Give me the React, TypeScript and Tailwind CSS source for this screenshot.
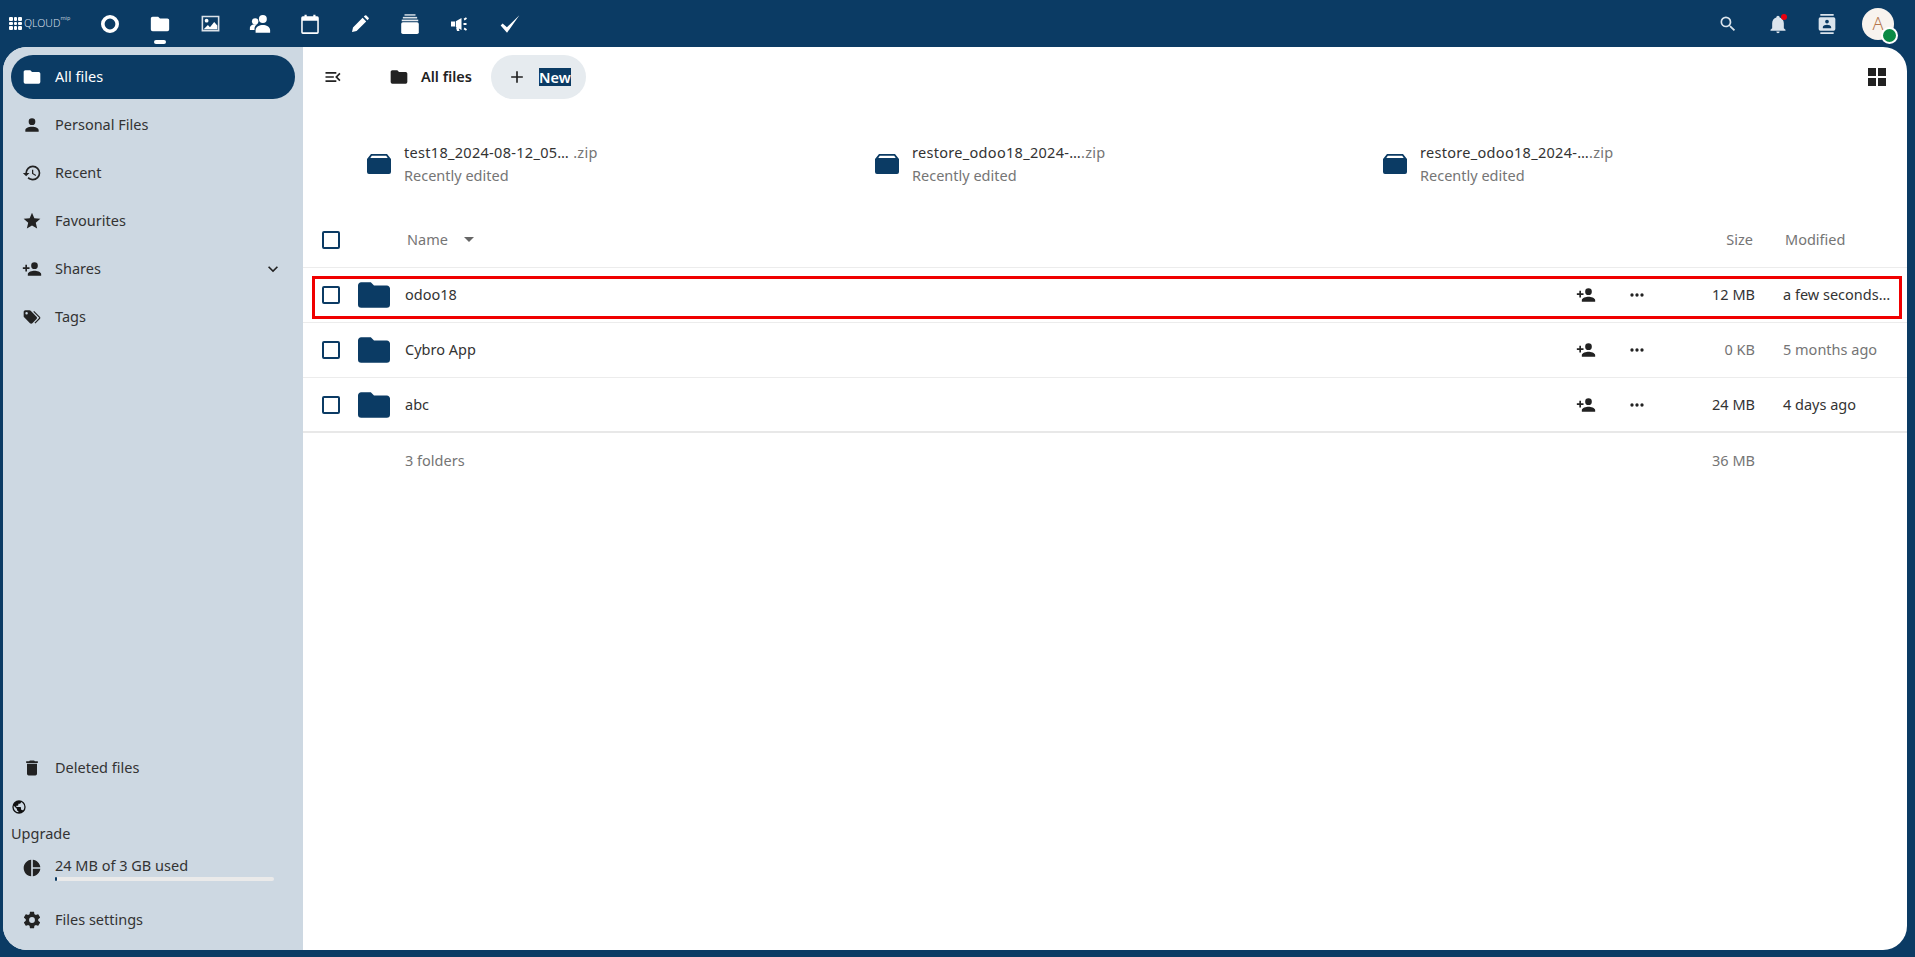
import React from "react";

const P = {
  folder: "M10,4H4C2.89,4 2,4.89 2,6V18A2,2 0 0,0 4,20H20A2,2 0 0,0 22,18V8C22,6.89 21.1,6 20,6H12L10,4Z",
  account: "M12,4A4,4 0 0,1 16,8A4,4 0 0,1 12,12A4,4 0 0,1 8,8A4,4 0 0,1 12,4M12,14C16.42,14 20,15.79 20,18V20H4V18C4,15.79 7.58,14 12,14Z",
  history: "M13.5,8H12V13L16.28,15.54L17,14.33L13.5,12.25V8M13,3A9,9 0 0,0 4,12H1L4.96,16.03L9,12H6A7,7 0 0,1 13,5A7,7 0 0,1 20,12A7,7 0 0,1 13,19C11.07,19 9.32,18.21 8.06,16.94L6.64,18.36C8.27,20 10.5,21 13,21A9,9 0 0,0 22,12A9,9 0 0,0 13,3",
  star: "M12,17.27L18.18,21L16.54,13.97L22,9.24L14.81,8.62L12,2L9.19,8.62L2,9.24L7.45,13.97L5.82,21L12,17.27Z",
  share: "M15,14C12.33,14 7,15.33 7,18V20H23V18C23,15.33 17.67,14 15,14M6,10V7H4V10H1V12H4V15H6V12H9V10M15,12A4,4 0 0,0 19,8A4,4 0 0,0 15,4A4,4 0 0,0 11,8A4,4 0 0,0 15,12Z",
  tags: "M5.5,9A1.5,1.5 0 0,0 7,7.5A1.5,1.5 0 0,0 5.5,6A1.5,1.5 0 0,0 4,7.5A1.5,1.5 0 0,0 5.5,9M17.41,11.58C17.77,11.94 18,12.44 18,13C18,13.55 17.78,14.05 17.41,14.41L12.41,19.41C12.05,19.77 11.55,20 11,20C10.45,20 9.95,19.78 9.58,19.41L2.59,12.42C2.22,12.05 2,11.55 2,11V6C2,4.89 2.89,4 4,4H9C9.55,4 10.05,4.22 10.41,4.58L17.41,11.58M13.54,5.71L14.54,4.71L21.41,11.58C21.78,11.94 22,12.45 22,13C22,13.55 21.78,14.05 21.42,14.41L16.04,19.79L15.04,18.79L20.75,13L13.54,5.71Z",
  trash: "M19,4H15.5L14.5,3H9.5L8.5,4H5V6H19M6,19A2,2 0 0,0 8,21H16A2,2 0 0,0 18,19V7H6V19Z",
  earth: "M17.9,17.39C17.64,16.59 16.89,16 16,16H15V13A1,1 0 0,0 14,12H8V10H10A1,1 0 0,0 11,9V7H13A2,2 0 0,0 15,5V4.59C17.93,5.77 20,8.64 20,12C20,14.08 19.2,15.97 17.9,17.39M11,19.93C7.05,19.44 4,16.08 4,12C4,11.38 4.08,10.78 4.21,10.21L9,15V16A2,2 0 0,0 11,18M12,2A10,10 0 0,0 2,12A10,10 0 0,0 12,22A10,10 0 0,0 22,12A10,10 0 0,0 12,2Z",
  pie: "M11,2V22C5.9,21.5 2,17.2 2,12C2,6.8 5.9,2.5 11,2M13,2V11H22C21.5,6.2 17.8,2.5 13,2M13,13V22C17.7,21.5 21.5,17.8 22,13H13Z",
  cog: "M12,15.5A3.5,3.5 0 0,1 8.5,12A3.5,3.5 0 0,1 12,8.5A3.5,3.5 0 0,1 15.5,12A3.5,3.5 0 0,1 12,15.5M19.43,12.97C19.47,12.65 19.5,12.33 19.5,12C19.5,11.67 19.47,11.34 19.43,11L21.54,9.37C21.73,9.22 21.78,8.95 21.66,8.73L19.66,5.27C19.54,5.05 19.27,4.96 19.05,5.05L16.56,6.05C16.04,5.66 15.5,5.32 14.87,5.07L14.5,2.42C14.46,2.18 14.25,2 14,2H10C9.75,2 9.54,2.18 9.5,2.42L9.13,5.07C8.5,5.32 7.96,5.66 7.44,6.05L4.95,5.05C4.73,4.96 4.46,5.05 4.34,5.27L2.34,8.73C2.21,8.95 2.27,9.22 2.46,9.37L4.57,11C4.53,11.34 4.5,11.67 4.5,12C4.5,12.33 4.53,12.65 4.57,12.97L2.46,14.63C2.27,14.78 2.21,15.05 2.34,15.27L4.34,18.73C4.46,18.95 4.73,19.03 4.95,18.95L7.44,17.94C7.96,18.34 8.5,18.68 9.13,18.93L9.5,21.58C9.54,21.82 9.75,22 10,22H14C14.25,22 14.46,21.82 14.5,21.58L14.87,18.93C15.5,18.67 16.04,18.34 16.56,17.94L19.05,18.95C19.27,19.03 19.54,18.95 19.66,18.73L21.66,15.27C21.78,15.05 21.73,14.78 21.54,14.63L19.43,12.97Z",
  chevron: "M7.41,8.58L12,13.17L16.59,8.58L18,10L12,16L6,10L7.41,8.58Z",
  dots: "M16,12A2,2 0 0,1 18,10A2,2 0 0,1 20,12A2,2 0 0,1 18,14A2,2 0 0,1 16,12M10,12A2,2 0 0,1 12,10A2,2 0 0,1 14,12A2,2 0 0,1 12,14A2,2 0 0,1 10,12M4,12A2,2 0 0,1 6,10A2,2 0 0,1 8,12A2,2 0 0,1 6,14A2,2 0 0,1 4,12Z",
  plus: "M19,13H13V19H11V13H5V11H11V5H13V11H19V13Z",
  grid: "M3,11H11V3H3M3,21H11V13H3M13,21H21V13H13M13,3V11H21V3",
  menuOpen: "M21,15.61L19.59,17L14.58,12L19.59,7L21,8.39L17.44,12L21,15.61M3,6H16V8H3V6M3,13V11H13V13H3M3,18V16H16V18H3Z",
  search: "M9.5,3A6.5,6.5 0 0,1 16,9.5C16,11.11 15.41,12.59 14.44,13.73L14.71,14H15.5L20.5,19L19,20.5L14,15.5V14.71L13.73,14.44C12.59,15.41 11.11,16 9.5,16A6.5,6.5 0 0,1 3,9.5A6.5,6.5 0 0,1 9.5,3M9.5,5C7,5 5,7 5,9.5C5,12 7,14 9.5,14C12,14 14,12 14,9.5C14,7 12,5 9.5,5Z",
  bell: "M21,19V20H3V19L5,17V11C5,7.9 7.03,5.17 10,4.29C10,4.19 10,4.1 10,4A2,2 0 0,1 12,2A2,2 0 0,1 14,4C14,4.1 14,4.19 14,4.29C16.97,5.17 19,7.9 19,11V17L21,19M14,21A2,2 0 0,1 12,23A2,2 0 0,1 10,21",
  contacts: "M20,0H4V2H20V0M4,24H20V22H4V24M20,4H4A2,2 0 0,0 2,6V18A2,2 0 0,0 4,20H20A2,2 0 0,0 22,18V6A2,2 0 0,0 20,4M12,6.75A2.25,2.25 0 0,1 14.25,9A2.25,2.25 0 0,1 12,11.25A2.25,2.25 0 0,1 9.75,9A2.25,2.25 0 0,1 12,6.75M17,17H7V15.5C7,13.83 10.33,13 12,13C13.67,13 17,13.83 17,15.5V17Z",
};

function Icon({ d, className }: { d: string; className?: string }) {
  return (
    <svg viewBox="0 0 24 24" fill="currentColor" className={className}>
      <path d={d} />
    </svg>
  );
}

function NavItem({ d, label, active, chevron }: { d: string; label: string; active?: boolean; chevron?: boolean }) {
  return (
    <div className={"flex h-[44px] items-center rounded-full pl-[11px] pr-[12px] mb-[4px] " + (active ? "bg-[#0b3b64] text-white" : "text-[#333]")}>
      <Icon d={d} className={"w-[20px] h-[20px] shrink-0 " + (active ? "text-white" : "text-[#222]")} />
      <span className="ml-[13px] flex-1">{label}</span>
      {chevron && <Icon d={P.chevron} className="w-[20px] h-[20px] text-[#222]" />}
    </div>
  );
}

function AppSlot({ children, active }: { children: React.ReactNode; active?: boolean }) {
  return (
    <div className="relative flex w-[50px] h-[42px] items-center justify-center">
      {children}
      {active && <span className="absolute bottom-[1px] left-[19px] w-[12px] h-[4px] rounded-full bg-white" />}
    </div>
  );
}

function TopApps() {
  return (
    <div className="flex items-center">
      <AppSlot>
        <svg viewBox="0 0 20 20" className="w-[20px] h-[20px] text-white" fill="none" stroke="currentColor" strokeWidth="3.6"><circle cx="10" cy="10" r="7.2" /></svg>
      </AppSlot>
      <AppSlot active>
        <Icon d={P.folder} className="w-[22px] h-[22px] text-white" />
      </AppSlot>
      <AppSlot>
        <svg viewBox="0 0 20 20" className="w-[21px] h-[21px] text-white" fill="currentColor">
          <path fillRule="evenodd" opacity=".85" d="M1.500 2.500h17v15h-17zM3 4v12h14V4z" />
          <circle cx="6.300" cy="7.300" r="1.800" />
          <path d="M3.500 15.500l4-4 2 2 4-5 3 3.500v3.500z" />
        </svg>
      </AppSlot>
      <AppSlot>
        <svg viewBox="0 0 20 20" className="w-[22px] h-[22px] text-white" fill="currentColor">
          <circle cx="12.600" cy="5.500" r="3.600" />
          <path d="M6 18v-2.400c0-3 3.600-4.600 6.600-4.600s6.600 1.600 6.600 4.600V18z" />
          <circle cx="5.600" cy="7.600" r="2.900" />
          <path d="M.8 15.500v-1.700c0-2.200 2.500-3.500 4.800-3.500.6 0 1.100.1 1.700.2-1.500.9-2.300 2.300-2.300 4v1z" />
        </svg>
      </AppSlot>
      <AppSlot>
        <svg viewBox="0 0 20 20" className="w-[22px] h-[22px] text-white" fill="currentColor">
          <path fillRule="evenodd" d="M3.500 3H5V1.500h2V3h6V1.500h2V3h1.500A1.500 1.500 0 0 1 18 4.500v13a1.500 1.500 0 0 1-1.500 1.500h-13A1.500 1.500 0 0 1 2 17.500v-13A1.500 1.500 0 0 1 3.500 3zM3.400 7v10.600h13.200V7z" />
        </svg>
      </AppSlot>
      <AppSlot>
        <svg viewBox="0 0 20 20" className="w-[20px] h-[20px] text-white" fill="currentColor">
          <path d="M2 18l1-4.600L12.600 3.800l3.600 3.600L6.600 17zM13.800 2.600l1.200-1.100a1 1 0 0 1 1.400 0l2.200 2.200a1 1 0 0 1 0 1.400l-1.200 1.100z" />
        </svg>
      </AppSlot>
      <AppSlot>
        <svg viewBox="0 0 20 20" className="w-[22px] h-[22px] text-white" fill="currentColor">
          <path d="M5 1h10v1.500H5z" opacity=".75" />
          <path d="M3.500 3.500h13V5h-13z" opacity=".85" />
          <path d="M2.500 6h15v1.500h-15z" opacity=".9" />
          <path d="M3.500 8.500h13A1.500 1.500 0 0 1 18 10v7.500a1.500 1.500 0 0 1-1.500 1.500h-13A1.500 1.500 0 0 1 2 17.500V10a1.500 1.500 0 0 1 1.500-1.500z" />
        </svg>
      </AppSlot>
      <AppSlot>
        <svg viewBox="0 0 20 20" className="w-[20px] h-[20px] text-white" fill="currentColor">
          <path d="M1 7.500h4v5H1zM5.800 7.300l5.700-3.300v12l-5.700-3.300zM6 13.500h2.500l1 3.500H7z" />
          <path d="M13.500 9h3v2h-3zM13.600 4.800l2.400-1.600 1 1.600-2.400 1.600zM13.600 15.200l2.400 1.600 1-1.600-2.400-1.600z" />
        </svg>
      </AppSlot>
      <AppSlot>
        <svg viewBox="0 0 20 20" className="w-[22px] h-[22px] text-white" fill="currentColor">
          <path d="M1.500 11.300L3.300 9.500 7.200 13 18.500 2 7.300 18z" />
        </svg>
      </AppSlot>
    </div>
  );
}

function Logo() {
  const dots = Array.from({ length: 9 });
  return (
    <div className="flex w-[76px] items-center text-white">
      <div className="grid grid-cols-3 gap-[1px] w-[13px]">
        {dots.map((_, i) => (
          <span key={i} className="w-[3.5px] h-[3.5px] bg-white rounded-[1px]" />
        ))}
      </div>
      <span className="ml-[2px] text-[10.500px] leading-none text-[#d5dfe8] font-light">QLOUD</span>
      <span className="text-[5.500px] leading-none self-start mt-[-1px] text-[#b9c7d4]">mip</span>
    </div>
  );
}

function Recent({ name, ext }: { name: string; ext: string }) {
  return (
    <div className="flex items-center w-[508px]">
      <svg viewBox="0 0 24 20" className="w-[24px] h-[20px] text-[#0b3b64] ml-[11px] shrink-0" fill="currentColor">
        <path fillRule="evenodd" d="M4 0h16l4 5v13a2 2 0 0 1-2 2H2a2 2 0 0 1-2-2V5zM4.800 1.800L3.300 4h17.400l-1.500-2.200z" />
      </svg>
      <div className="ml-[13px] flex flex-col">
        <div className="h-[22px] leading-[22px] text-[#333] whitespace-pre tracking-[0.3px]">
          {name}
          <span className="text-[#757575]">{ext}</span>
        </div>
        <div className="h-[24px] leading-[24px] text-[#757575]">Recently edited</div>
      </div>
    </div>
  );
}

function Row({ name, size, modified, dim, last }: { name: string; size: string; modified: string; dim?: boolean; last?: boolean }) {
  return (
    <div className={"flex items-center h-[55px] " + (last ? "border-b-2 border-[#e8e8e8]" : "border-b border-[#ececec]")}>
      <span className="ml-[19px] w-[18px] h-[18px] border-2 border-[#0b3b64] rounded-[2px] bg-white shrink-0" />
      <svg viewBox="2 4 20 16" className="ml-[18px] w-[32px] h-[26px] text-[#0b3b64] shrink-0" fill="currentColor">
        <path d={P.folder} />
      </svg>
      <span className="ml-[15px] flex-1 text-[#333]">{name}</span>
      <Icon d={P.share} className="w-[20px] h-[20px] text-[#222] mr-[31px]" />
      <Icon d={P.dots} className="w-[20px] h-[20px] text-[#222] mr-[17px]" />
      <span className={"w-[91px] text-right " + (dim ? "text-[#757575]" : "text-[#333]")}>{size}</span>
      <span className={"ml-[28px] w-[111px] whitespace-nowrap " + (dim ? "text-[#757575]" : "text-[#333]")}>{modified}</span>
      <span className="w-[13px]" />
    </div>
  );
}

export default function App() {
  return (
    <div className="flex h-[957px] w-[1915px] flex-col overflow-hidden bg-[#0b3b64] text-[14.500px]" style={{ fontFamily: '"Noto Sans", "Open Sans", sans-serif' }}>
      <header className="flex h-[47px] shrink-0 items-center pl-[9px] text-white">
        <Logo />
        <TopApps />
        <div className="ml-auto flex items-center">
          <Icon d={P.search} className="w-[20px] h-[20px] text-[#dbe4ec]" />
          <div className="relative ml-[30px]">
            <Icon d={P.bell} className="w-[20px] h-[20px] text-[#dbe4ec]" />
            <span className="absolute top-[0px] right-[1px] w-[6px] h-[6px] rounded-full bg-[#e9000f]" />
          </div>
          <Icon d={P.contacts} className="ml-[29px] w-[20px] h-[20px] text-[#dbe4ec]" />
          <div className="relative ml-[25px] mr-[21px] flex w-[32px] h-[32px] items-center justify-center rounded-full bg-[#f8f3ee] text-[#b5764c] text-[18px] font-light">
            A
            <span className="absolute right-[-4px] bottom-[-4px] w-[17px] h-[17px] rounded-full bg-[#0a8a45] border-2 border-white" />
          </div>
        </div>
      </header>
      <div className="ml-[3px] mr-[8px] mb-[7px] flex flex-1 min-h-0 overflow-hidden rounded-[24px] bg-white">
        <aside className="flex w-[300px] shrink-0 flex-col bg-[#cdd8e2] pl-[8px] pr-[8px] pt-[8px] text-[#333]">
          <NavItem d={P.folder} label="All files" active />
          <NavItem d={P.account} label="Personal Files" />
          <NavItem d={P.history} label="Recent" />
          <NavItem d={P.star} label="Favourites" />
          <NavItem d={P.share} label="Shares" chevron />
          <NavItem d={P.tags} label="Tags" />
          <div className="mt-auto">
            <NavItem d={P.trash} label="Deleted files" />
            <Icon d={P.earth} className="w-[16px] h-[16px] mt-[9px] text-[#111]" />
            <div className="mt-[8px] leading-[20px]">Upgrade</div>
            <div className="mt-[12px] flex items-center pl-[11px] pr-[21px]">
              <Icon d={P.pie} className="w-[20px] h-[20px] shrink-0 text-[#222]" />
              <div className="ml-[13px] flex-1">
                <div className="leading-[20px]">24 MB of 3 GB used</div>
                <div className="mt-[2px] h-[4px] rounded-full bg-[#eaeaea]">
                  <div className="h-full w-[2px] rounded-full bg-[#0b3b64]" />
                </div>
              </div>
            </div>
            <div className="mt-[17px]">
              <NavItem d={P.cog} label="Files settings" />
            </div>
            <div className="h-[4px]" />
          </div>
        </aside>
        <main className="relative flex-1 min-w-0">
          <div className="flex h-[44px] mt-[8px] items-center">
            <Icon d={P.menuOpen} className="ml-[20px] w-[20px] h-[20px] text-[#222]" />
            <Icon d={P.folder} className="ml-[46px] w-[20px] h-[20px] text-[#222]" />
            <span className="ml-[12px] font-semibold text-[#222]">All files</span>
            <div className="ml-[19px] flex h-[44px] w-[95px] items-center rounded-full bg-[#e6ebef] pl-[16px] text-[#222]">
              <Icon d={P.plus} className="w-[20px] h-[20px]" />
              <span className="ml-[12px] bg-[#0b3b64] font-semibold text-white leading-[18px]">New</span>
            </div>
            <Icon d={P.grid} className="ml-auto mr-[18px] w-[24px] h-[24px] text-[#222]" />
          </div>
          <div className="mt-[42px] flex pl-[53px]">
            <Recent name="test18_2024-08-12_05…" ext=" .zip" />
            <Recent name="restore_odoo18_2024-…" ext=".zip" />
            <Recent name="restore_odoo18_2024-…" ext=".zip" />
          </div>
          <div className="mt-[27px] flex h-[54px] items-center border-b border-[#ececec] pb-[2px] text-[#757575]">
            <span className="ml-[19px] w-[18px] h-[18px] border-2 border-[#0b3b64] rounded-[2px] shrink-0" />
            <span className="ml-[67px]">Name</span>
            <svg viewBox="0 0 10 5" className="ml-[16px] w-[10px] h-[5px] text-[#666]" fill="currentColor"><path d="M0 0h10L5 5z" /></svg>
            <span className="ml-auto">Size</span>
            <span className="ml-[32px] w-[122px]">Modified</span>
          </div>
          <Row name="odoo18" size="12 MB" modified="a few seconds…" />
          <Row name="Cybro App" size="0 KB" modified="5 months ago" dim />
          <Row name="abc" size="24 MB" modified="4 days ago" last />
          <div className="flex h-[55px] items-center text-[#757575]">
            <span className="ml-[102px] flex-1">3 folders</span>
            <span className="mr-[152px]">36 MB</span>
          </div>
          <div className="absolute left-[9px] top-[229px] h-[43px] w-[1590px] border-[3px] border-[#f00000]" />
        </main>
      </div>
    </div>
  );
}
